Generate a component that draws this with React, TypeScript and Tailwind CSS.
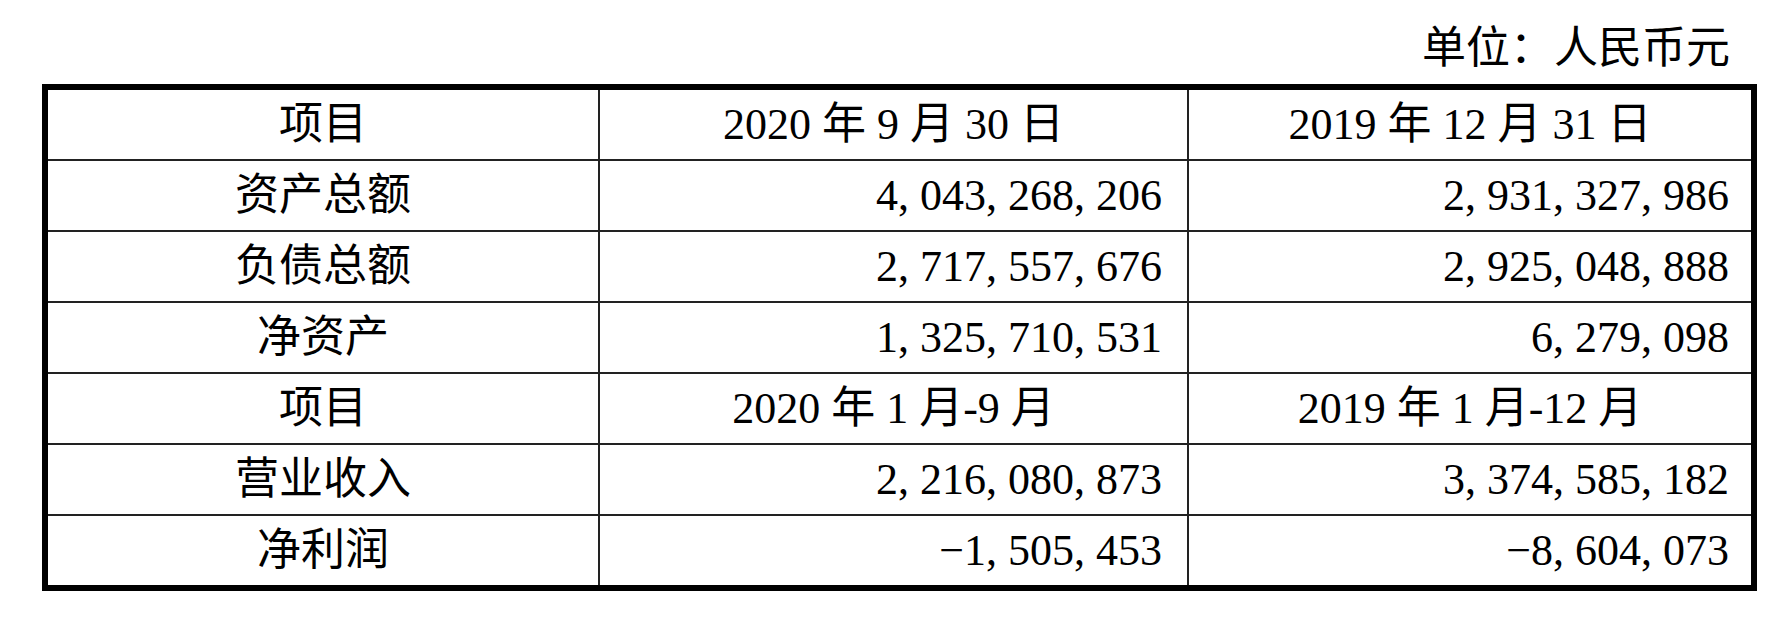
import React from "react";

const FONT = '"Liberation Serif", "Noto Sans CJK SC", serif';

function Num({ v }: { v: string }) {
  const parts = v.split(",");
  return (
    <span>
      {parts.map((p, i) => (
        <React.Fragment key={i}>
          {p}
          {i < parts.length - 1 && <span className="mr-[0.25em]">,</span>}
        </React.Fragment>
      ))}
    </span>
  );
}

type Row = { kind: "head" | "data"; c: [string, string, string] };

const rows: Row[] = [
  { kind: "head", c: ["项目", "2020 年 9 月 30 日", "2019 年 12 月 31 日"] },
  { kind: "data", c: ["资产总额", "4,043,268,206", "2,931,327,986"] },
  { kind: "data", c: ["负债总额", "2,717,557,676", "2,925,048,888"] },
  { kind: "data", c: ["净资产", "1,325,710,531", "6,279,098"] },
  { kind: "head", c: ["项目", "2020 年 1 月-9 月", "2019 年 1 月-12 月"] },
  { kind: "data", c: ["营业收入", "2,216,080,873", "3,374,585,182"] },
  { kind: "data", c: ["净利润", "−1,505,453", "−8,604,073"] },
];

export default function App() {
  return (
    <div
      className="w-[1776px] h-[620px] bg-white text-black"
      style={{ fontFamily: FONT }}
    >
      <div className="h-[84px] pt-[27px] pr-[46px] flex justify-end text-[44px] leading-none">
        单位：人民币元
      </div>
      <div className="ml-[42px] w-[1715px] border-[6px] border-black">
        {rows.map((r, i) => (
          <div
            key={i}
            className={`grid grid-cols-[550px_2px_587px_2px_562px] text-[44px] leading-none ${
              i > 0 ? "h-[71px] border-t-2 border-[#222]" : "h-[69px]"
            }`}
          >
            <div className="flex items-center justify-center">{r.c[0]}</div>
            <div className="bg-[#222]" />
            {r.kind === "head" ? (
              <div className="flex items-center justify-center">{r.c[1]}</div>
            ) : (
              <div className="flex items-center justify-end pr-[25px]">
                <Num v={r.c[1]} />
              </div>
            )}
            <div className="bg-[#222]" />
            {r.kind === "head" ? (
              <div className="flex items-center justify-center">{r.c[2]}</div>
            ) : (
              <div className="flex items-center justify-end pr-[22px]">
                <Num v={r.c[2]} />
              </div>
            )}
          </div>
        ))}
      </div>
    </div>
  );
}
